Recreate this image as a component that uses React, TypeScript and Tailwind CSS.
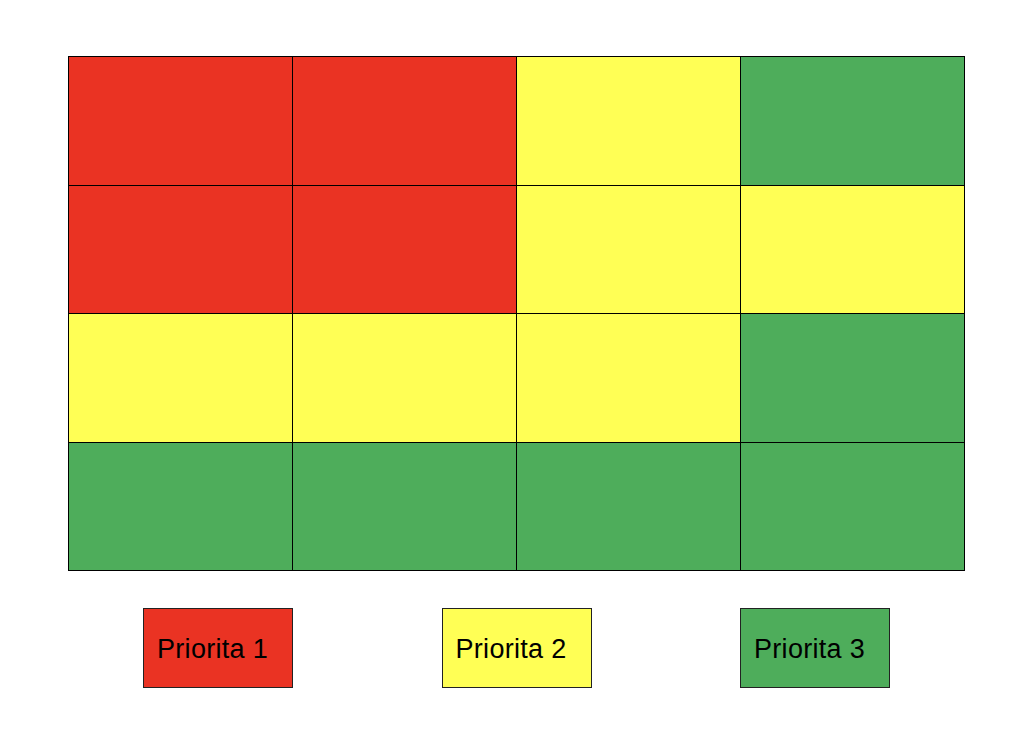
import React from "react";

const R = "bg-[#ea3323]";
const Y = "bg-[#ffff55]";
const G = "bg-[#4ead5b]";

const cells = [
  R, R, Y, G,
  R, R, Y, Y,
  Y, Y, Y, G,
  G, G, G, G,
];

const legend = [
  { c: R, t: "Priorita 1" },
  { c: Y, t: "Priorita 2" },
  { c: G, t: "Priorita 3" },
];

export default function App() {
  return (
    <div className="w-[1024px] h-[748px] bg-white overflow-hidden" style={{ fontFamily: '"Liberation Sans", Arial, sans-serif' }}>
      <div className="ml-[68px] mt-[56px] w-[897px] h-[515px] bg-black p-px grid grid-cols-4 grid-rows-4 gap-px">
        {cells.map((c, i) => (
          <div key={i} className={c} />
        ))}
      </div>
      <div className="flex pl-[143px] gap-[148.5px] mt-[37px]">
        {legend.map((l) => (
          <div
            key={l.t}
            className={`${l.c} w-[150px] h-[80px] border border-[#222] flex items-center pl-[13px] pt-[2px] text-[27px] tracking-[0.3px] text-black`}
          >
            {l.t}
          </div>
        ))}
      </div>
    </div>
  );
}
